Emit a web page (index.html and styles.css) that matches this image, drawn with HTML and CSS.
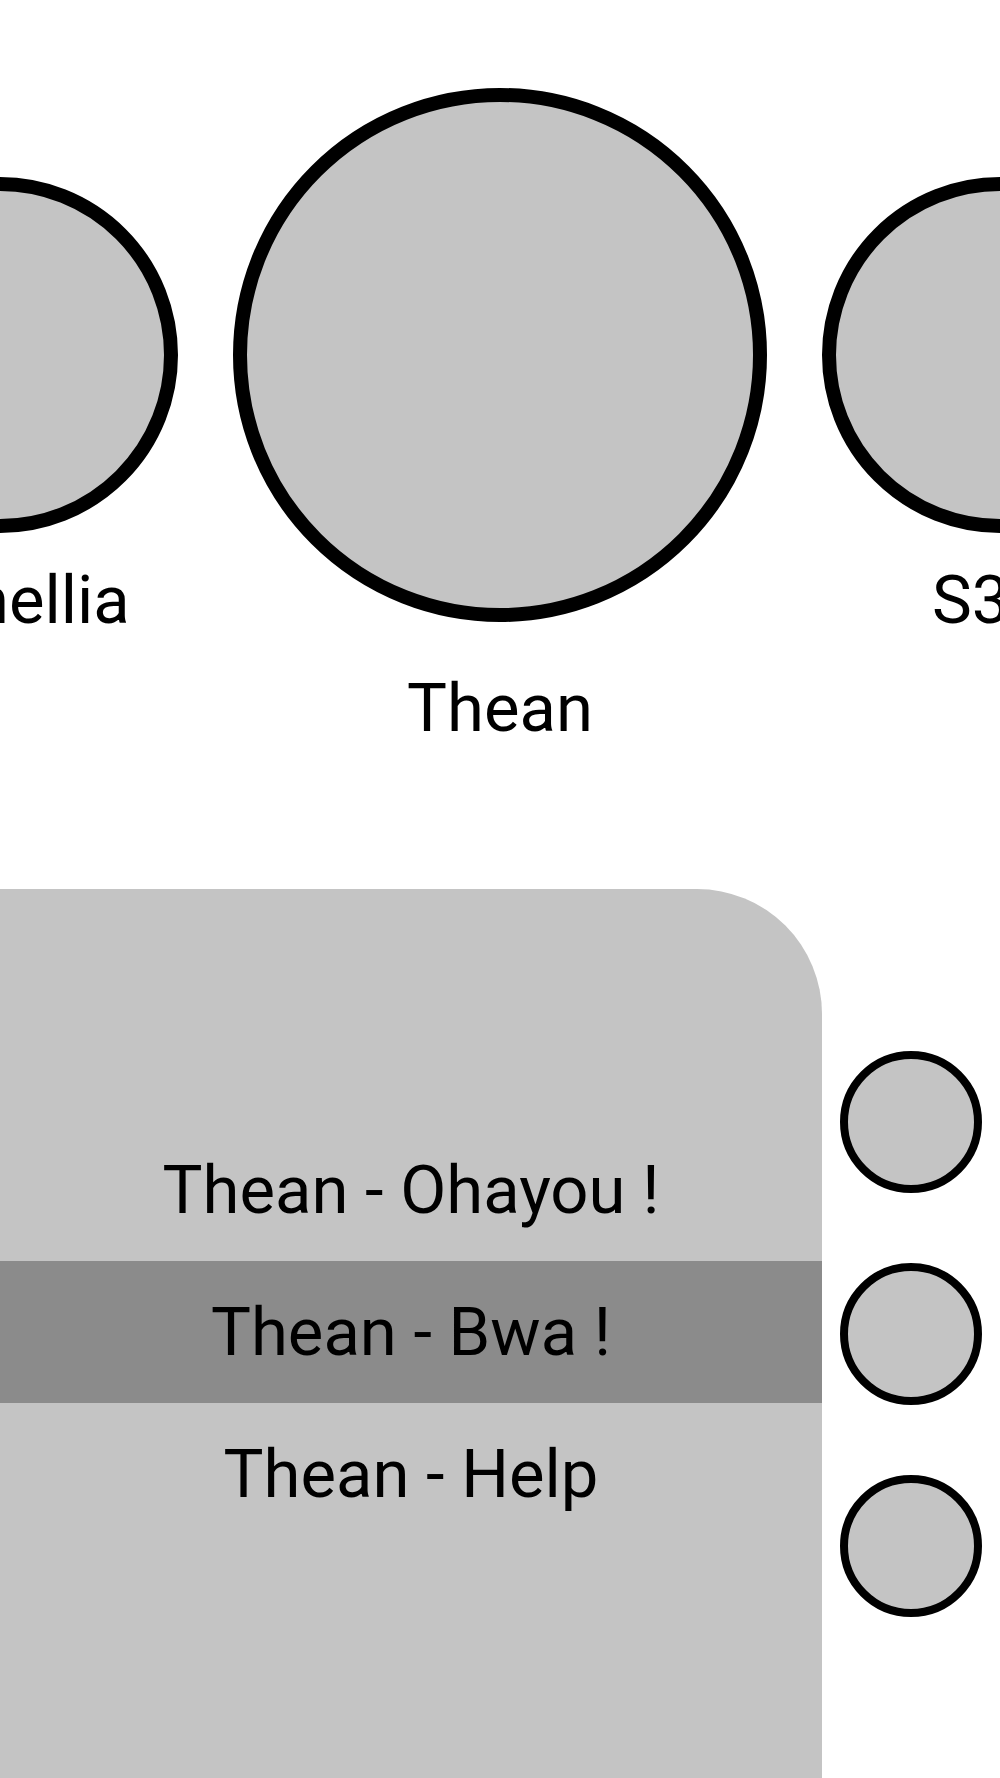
FILE: index.html
```html
<!DOCTYPE html>
<html lang="fr">
<head>
    <meta charset="UTF-8">
    <meta name="viewport" content="width=device-width, initial-scale=1.0">
    <title>Thean</title>
    <link rel="stylesheet" href="styles.css">
</head>
<body>

    <!-- Character carousel -->
    <div class="carousel">
        <div class="character side">
            <div class="avatar"></div>
            <div class="name">Camellia</div>
        </div>
        <div class="character current">
            <div class="avatar"></div>
            <div class="name">Thean</div>
        </div>
        <div class="character side">
            <div class="avatar"></div>
            <div class="name">S3M</div>
        </div>
    </div>

    <!-- Voice lines -->
    <div class="bottom">
        <div class="voicePanel">
            <div class="voiceLine">Thean - Ohayou !</div>
            <div class="voiceLine selected">Thean - Bwa !</div>
            <div class="voiceLine">Thean - Help</div>
        </div>
        <div class="controls">
            <div class="controlBtn"></div>
            <div class="controlBtn"></div>
            <div class="controlBtn"></div>
        </div>
    </div>

</body>
</html>
```

FILE: styles.css
```css
body {
    margin: 0;
    width: 1000px;
    height: 1778px;
    overflow: hidden;
    background-color: #ffffff;
    font-family: Roboto, "Noto Sans", sans-serif;
    color: #000000;
}
.carousel {
    display: flex;
    align-items: flex-start;
    gap: 55px;
    height: 889px;
    padding-top: 88px;
    margin-left: -178px;
    box-sizing: border-box;
}
.character {
    display: flex;
    flex-direction: column;
    align-items: center;
    flex-shrink: 0;
}
.avatar {
    box-sizing: border-box;
    border-radius: 50%;
    border: 14px solid #000000;
    background-color: #c4c4c4;
}
.name {
    font-size: 67px;
    line-height: 78px;
    white-space: nowrap;
}
.side {
    margin-top: 89px;
}
.side .avatar {
    width: 356px;
    height: 356px;
}
.side .name {
    margin-top: 28px;
}
.current .avatar {
    width: 534px;
    height: 534px;
}
.current .name {
    margin-top: 47px;
}
.bottom {
    display: flex;
    height: 889px;
}
.voicePanel {
    width: 822px;
    flex-shrink: 0;
    background-color: #c4c4c4;
    border-top-right-radius: 125px;
    padding-top: 230px;
    box-sizing: border-box;
}
.voiceLine {
    height: 142px;
    display: flex;
    align-items: center;
    justify-content: center;
    font-size: 67px;
}
.selected {
    background-color: #8b8b8b;
}
.controls {
    flex: 1;
    display: flex;
    flex-direction: column;
    align-items: center;
    gap: 70px;
    padding-top: 162px;
}
.controlBtn {
    width: 142px;
    height: 142px;
    box-sizing: border-box;
    border-radius: 50%;
    border: 8px solid #000000;
    background-color: #c4c4c4;
}
```
